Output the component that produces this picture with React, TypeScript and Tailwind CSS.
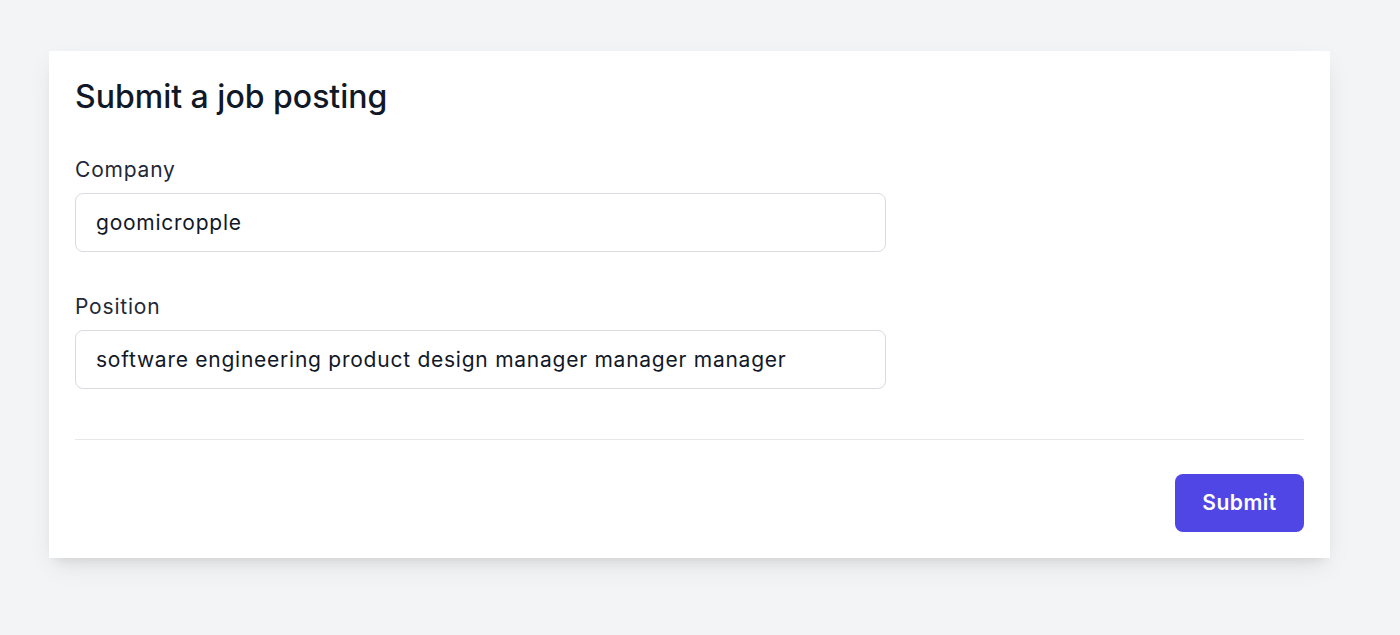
import { useState } from 'react';

const FONT = { fontFamily: 'Inter, "Noto Sans", sans-serif' };

const Field = ({ label, value, onChange }: { label: string; value: string; onChange: (v: string) => void }) => (
  <label className="flex flex-col gap-[9px]">
    <span className="text-[21px] leading-[28px] tracking-[0.8px] text-[#1f2937]">{label}</span>
    <input
      value={value}
      onChange={(e) => onChange(e.target.value)}
      className="h-[59px] w-[811px] rounded-lg border border-[#d9dbe0] bg-white px-[20px] text-[21px] tracking-[0.75px] text-[#111827] outline-none"
      style={FONT}
    />
  </label>
);

export default function App() {
  const [company, setCompany] = useState('goomicropple');
  const [position, setPosition] = useState('software engineering product design manager manager manager');

  return (
    <div className="min-h-[635px] bg-[#f3f4f6] pl-[49px] pt-[51px]" style={FONT}>
      <div className="w-[1281px] bg-white p-[26px] shadow-[0_10px_25px_-5px_rgba(0,0,0,0.1),0_8px_10px_-6px_rgba(0,0,0,0.08)]">
        <h1 className="text-[32px] leading-[40px] font-medium text-[#111827]">Submit a job posting</h1>

        <div className="mt-[39px] flex flex-col gap-[41px]">
          <Field label="Company" value={company} onChange={setCompany} />
          <Field label="Position" value={position} onChange={setPosition} />
        </div>

        <div className="mt-[50px] h-px w-full bg-[#e5e7eb]" />

        <div className="mt-[34px] flex justify-end">
          <button className="h-[58px] w-[129px] rounded-lg bg-[#4f46e5] text-[21px] tracking-[0.5px] font-semibold text-white">
            Submit
          </button>
        </div>
      </div>
    </div>
  );
}
